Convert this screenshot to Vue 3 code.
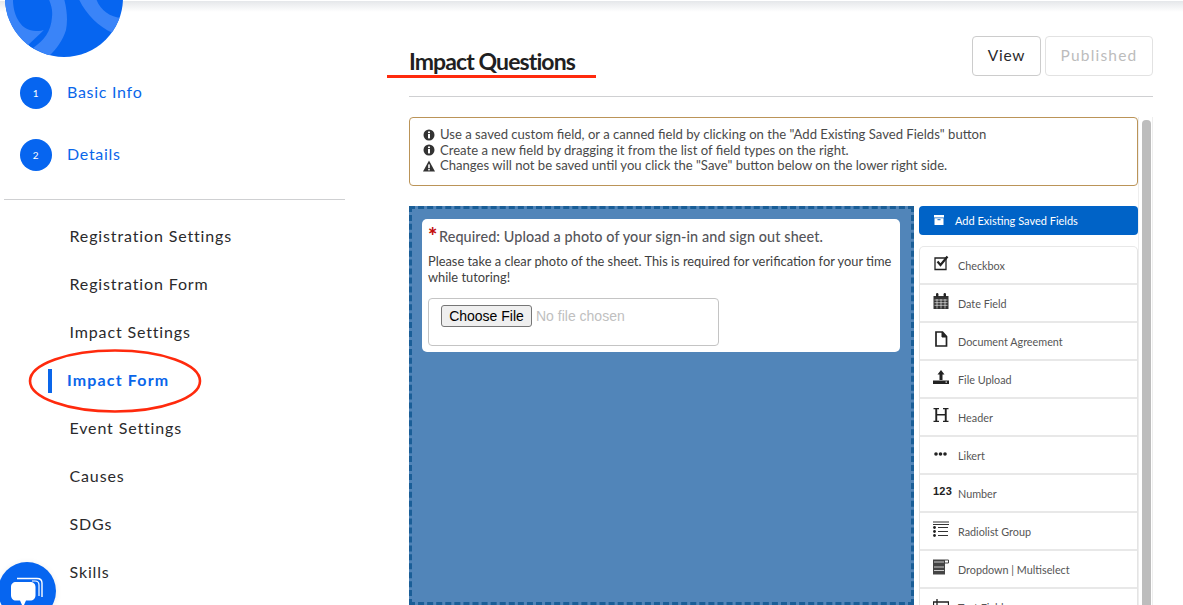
<script setup>
const fields = [
  { label: 'Checkbox', icon: 'check' },
  { label: 'Date Field', icon: 'date' },
  { label: 'Document Agreement', icon: 'doc' },
  { label: 'File Upload', icon: 'upload' },
  { label: 'Header', icon: 'header' },
  { label: 'Likert', icon: 'likert' },
  { label: 'Number', icon: 'number' },
  { label: 'Radiolist Group', icon: 'radio' },
  { label: 'Dropdown | Multiselect', icon: 'drop' },
  { label: 'Text Field', icon: 'text' }
]
const menu = ['Registration Settings', 'Registration Form', 'Impact Settings', 'Impact Form', 'Event Settings', 'Causes', 'SDGs', 'Skills']
</script>

<template>
  <div class="page">
    <div class="topshade"></div>
    <aside class="side">
      <svg class="logo" viewBox="5 -61 118 118">
        <defs><clipPath id="lc"><circle cx="64" cy="-2" r="59" /></clipPath></defs>
        <circle cx="64" cy="-2" r="59" fill="#0665f0" />
        <g clip-path="url(#lc)">
          <path d="M0 -5H46L44 30L27 46L20 58L0 40Z" fill="#3a84f8" />
          <path d="M13 -5C12 14 20 31 36 31C40 31 43 30.500 44 30C40 36 34 42 28 46L34 50L52 34C55 20 54 8 47 -5Z" fill="#0665f0" />
          <path d="M33 48C44 40 51 32 52 17C53 8 50 2 47 -5H63C67 8 68 20 66 30C63 40 56 50 49 56Z" fill="#3a84f8" />
          <path d="M77 -5C84 12 97 26 113 33L122 18C108 17 98 8 95 -5Z" fill="#3a84f8" />
        </g>
      </svg>
      <div class="steps">
        <a class="step"><span class="num">1</span><span class="steptext">Basic Info</span></a>
        <a class="step"><span class="num">2</span><span class="steptext">Details</span></a>
      </div>
      <hr class="siderule" />
      <nav class="menu">
        <a v-for="m in menu" :key="m" class="item" :class="{ active: m === 'Impact Form' }">{{ m }}</a>
      </nav>
      <svg class="ellipse" viewBox="0 0 174 64">
        <ellipse cx="87" cy="32" rx="85" ry="30.500" fill="none" stroke="#ff2a0d" stroke-width="2.600" />
      </svg>
      <div class="chat">
        <svg width="34" height="34" viewBox="0 0 34 34">
          <path d="M7 4.500H27C30 4.500 32 6 32 9V23" fill="none" stroke="#fff" stroke-width="1.400" />
          <path d="M6 8H20C23.500 8 25.500 10 25.500 13V21C25.500 24.500 23.500 26.500 20 26.500H16L14 31H12L10 26.500H6C3 26.500 1 24.500 1 21V13C1 10 3 8 6 8Z" fill="#fff" />
          <path d="M22 7H25C27.500 7 29 8.500 29 11V22" fill="none" stroke="#fff" stroke-width="1.200" />
        </svg>
      </div>
    </aside>

    <main class="main">
      <header class="head">
        <h1 class="title">Impact Questions</h1>
        <div class="btns">
          <button class="btn view">View</button>
          <button class="btn off">Published</button>
        </div>
      </header>
      <hr class="rule" />
      <div class="workspace">
        <div class="left">
          <div class="notice">
            <div class="nline"><svg class="ni" viewBox="0 0 12 12"><circle cx="6" cy="6" r="5.500" fill="#333" /><rect x="5" y="5" width="2" height="4.400" fill="#fff" /><rect x="5" y="2.500" width="2" height="1.600" fill="#fff" /></svg>Use a saved custom field, or a canned field by clicking on the "Add Existing Saved Fields" button</div>
            <div class="nline"><svg class="ni" viewBox="0 0 12 12"><circle cx="6" cy="6" r="5.500" fill="#333" /><rect x="5" y="5" width="2" height="4.400" fill="#fff" /><rect x="5" y="2.500" width="2" height="1.600" fill="#fff" /></svg>Create a new field by dragging it from the list of field types on the right.</div>
            <div class="nline"><svg class="ni" viewBox="0 0 12 12"><path d="M6 .5L12 11.500H0Z" fill="#333" /><rect x="5.200" y="4.400" width="1.600" height="3.800" fill="#fff" /><rect x="5.200" y="9" width="1.600" height="1.400" fill="#fff" /></svg>Changes will not be saved until you click the "Save" button below on the lower right side.</div>
          </div>
          <div class="builder">
            <section class="drop">
              <div class="card">
                <div class="qlabel"><span class="star">*</span>Required: Upload a photo of your sign-in and sign out sheet.</div>
                <p class="qhelp">Please take a clear photo of the sheet. This is required for verification for your time while tutoring!</p>
                <div class="filebox"><span class="choose">Choose File</span><span class="nofile">No file chosen</span></div>
              </div>
            </section>
            <section class="palette">
              <button class="addbtn">
                <svg class="addicon" viewBox="0 0 10 10"><path d="M0 0H10V2.500H0ZM.5 3.200H9.500V10H.5Z" fill="#fff" /><rect x="3.500" y="4.200" width="3" height="1" fill="#0063c7" /></svg>
                Add Existing Saved Fields
              </button>
              <ul class="flist">
                <li v-for="f in fields" :key="f.label" class="fitem">
                  <span class="ficon">
                    <svg v-if="f.icon === 'check'" viewBox="0 0 16 16" class="fi"><path d="M2 3H13V14.500H2Z" fill="none" stroke="#222" stroke-width="1.300" /><path d="M4.500 6.500L7.500 10L14.500 1.500" fill="none" stroke="#222" stroke-width="2.200" /></svg>
                    <svg v-else-if="f.icon === 'date'" viewBox="0 0 16 16" class="fi"><path d="M.5 3H15.500V16H.5Z" fill="#333" /><path d="M1.500 7H14.500M1.500 9.700H14.500M1.500 12.300H14.500M4 6V15.500M8 6V15.500M12 6V15.500" stroke="#fff" stroke-width=".6" /><rect x="3" y="0" width="2.400" height="4" rx="1.200" fill="#222" /><rect x="10.600" y="0" width="2.400" height="4" rx="1.200" fill="#222" /></svg>
                    <svg v-else-if="f.icon === 'doc'" viewBox="0 0 16 16" class="fi"><path d="M3 1H9.500L13.500 5.500V15H3Z" fill="none" stroke="#222" stroke-width="1.700" /><path d="M9 1V6H13.500" fill="#222" stroke="#222" /></svg>
                    <svg v-else-if="f.icon === 'upload'" viewBox="0 0 16 16" class="fi"><path d="M8 1L11.500 5.500H9.500V11H6.500V5.500H4.500Z" fill="#222" /><path d="M0 11.500H16V15H0Z" fill="#222" /><rect x="12.500" y="12.500" width="1.500" height="1.200" fill="#ddd" /></svg>
                    <svg v-else-if="f.icon === 'header'" viewBox="0 0 16 16" class="fi"><path d="M.5 1H6V2.200H4.200V7H11.800V2.200H10V1H15.500V2.200H13.700V13.800H15.500V15H10V13.800H11.800V8.400H4.200V13.800H6V15H.5V13.800H2.300V2.200H.5Z" fill="#222" /></svg>
                    <svg v-else-if="f.icon === 'likert'" viewBox="0 0 16 16" class="fi"><circle cx="3" cy="9" r="1.800" fill="#222" /><circle cx="7.500" cy="9" r="1.800" fill="#222" /><circle cx="12" cy="9" r="1.800" fill="#222" /></svg>
                    <span v-else-if="f.icon === 'number'" class="num123">123</span>
                    <svg v-else-if="f.icon === 'radio'" viewBox="0 0 16 16" class="fi"><path d="M0 1H16M0 3.500H16M5 6.500H15M5 10.500H15M5 14.500H15" stroke="#333" stroke-width="1" /><circle cx="1.500" cy="6.500" r="1.400" fill="#222" /><circle cx="1.500" cy="10.500" r="1.400" fill="#222" /><circle cx="1.500" cy="14.500" r="1.400" fill="#222" /></svg>
                    <svg v-else-if="f.icon === 'drop'" viewBox="0 0 16 16" class="fi"><path d="M0 .5H12V15.500H0Z" fill="#444" /><path d="M1 3H11M1 8H11M1 11.500H11" stroke="#ccc" stroke-width="1.200" /><path d="M12 1H15.500V4H12" fill="none" stroke="#444" /></svg>
                    <svg v-else viewBox="0 0 16 16" class="fi"><path d="M0.500 5H15.500V13H0.500ZM4 2V15" fill="none" stroke="#222" stroke-width="1.300" /></svg>
                  </span>
                  <span class="flabel">{{ f.label }}</span>
                </li>
              </ul>
            </section>
          </div>
        </div>
        <div class="scroll"><div class="thumb"></div></div>
      </div>
    </main>
  </div>
</template>

<style>
html, body { margin: 0; height: 605px; overflow: hidden; background: #fff; }
</style>

<style scoped>
.page { position: relative; display: flex; width: 1183px; height: 605px; overflow: hidden; background: #fff; font-family: Lato, "Liberation Sans", sans-serif; color: #333; }
.topshade { position: absolute; left: 0; right: 0; top: 1px; height: 11px; background: linear-gradient(#e5e7ea, #fff); }
.side { position: relative; width: 345px; margin-left: 4px; flex: none; display: flex; flex-direction: column; }
.logo { position: relative; display: block; width: 118px; height: 118px; margin: -61px 0 0 1px; flex: none; }
.steps { display: flex; flex-direction: column; gap: 30px; margin: 20px 0 0 16px; }
.step { display: flex; align-items: center; gap: 15px; color: #0a66ea; font-size: 16px; letter-spacing: .72px; }
.steptext { margin-top: -4px; }
.num { width: 32px; height: 32px; border-radius: 50%; background: #0665f0; color: #fff; font-size: 10px; display: flex; align-items: center; justify-content: center; }
.siderule { width: 341px; height: 0; border: 0; border-top: 1px solid #cfd0d2; margin: 28px 0 0; }
.menu { display: flex; flex-direction: column; margin-top: 13px; }
.item { position: relative; height: 48px; line-height: 46px; padding-left: 65.500px; font-size: 16px; letter-spacing: .86px; color: #2a2a2c; }
.item.active { padding-left: 63px; color: #0a66ea; font-weight: 700; letter-spacing: 1.150px; }
.item.active::before { content: ""; position: absolute; left: 44px; top: 12px; width: 4px; height: 24px; background: #0a66ea; }
.ellipse { position: absolute; left: 24px; top: 349px; width: 174px; height: 64px; }
.chat { position: absolute; left: -6px; top: 562px; width: 58px; height: 58px; border-radius: 50%; background: #0665f0; display: flex; align-items: center; justify-content: center; box-shadow: 0 1px 6px rgba(0, 0, 0, .08); }
.main { position: relative; margin-left: 60px; width: 744px; flex: none; display: flex; flex-direction: column; }
.head { position: relative; display: flex; justify-content: space-between; align-items: flex-start; height: 96px; padding-top: 36px; box-sizing: border-box; }
.title { position: relative; margin: 11px 0 0; font-weight: 700; font-size: 23px; line-height: 28px; letter-spacing: -.9px; color: #1f1f22; }
.title::after { content: ""; position: absolute; left: -22px; width: 209px; top: 28px; height: 3px; background: #ff2a0d; }
.btns { display: flex; gap: 4px; }
.btn { height: 40px; padding: 0 0 2px; background: #fff; border: 1px solid #ccc; border-radius: 4px; font-family: Lato, sans-serif; font-size: 15.500px; letter-spacing: .8px; color: #2a2a2c; }
.btn.view { width: 69px; }
.btn.off { width: 108px; border-color: #e2e2e2; color: #bcbcbc; letter-spacing: 1.200px; }
.rule { width: 100%; height: 0; margin: 0; border: 0; border-top: 1px solid #cfd0d2; }
.workspace { display: flex; margin-top: 20px; flex: 1; min-height: 0; }
.left { width: 729px; flex: none; }
.notice { box-sizing: border-box; height: 69px; padding: 9px 13px; border: 1px solid #bb9458; border-radius: 4px; font-size: 13.100px; line-height: 15.500px; color: #4a4a4a; }
.nline { display: flex; align-items: center; gap: 5px; }
.ni { width: 12px; height: 12px; flex: none; }
.builder { display: flex; gap: 5px; margin-top: 20px; }
.drop { box-sizing: border-box; width: 505px; height: 399px; padding: 10px; background: #5185b9; border: 3px dashed #1a5e97; }
.card { box-sizing: border-box; width: 478px; height: 133px; padding: 9px 6px; background: #fff; border-radius: 5px; }
.qlabel { position: relative; font-size: 14.400px; line-height: 18px; color: #55555a; font-weight: 500; letter-spacing: .1px; padding-left: 11px; }
.star { position: absolute; left: 0; top: -3px; color: #c40d0d; font-weight: 900; font-size: 22px; line-height: 22px; }
.qhelp { margin: 7px 0 0; font-size: 12.850px; line-height: 16px; color: #3f3f3f; }
.filebox { box-sizing: border-box; display: flex; align-items: flex-start; margin-top: 13px; width: 291px; height: 48px; padding: 6px 12px; border: 1px solid #c4c4c4; border-radius: 4px; }
.choose { box-sizing: border-box; width: 91px; height: 22px; line-height: 21px; text-align: center; background: #efefef; border: 1px solid #767676; border-radius: 3px; font-family: "Liberation Sans", sans-serif; font-size: 14px; color: #000; }
.nofile { margin-left: 4px; line-height: 22px; font-family: "Liberation Sans", sans-serif; font-size: 14px; color: #c0c0c0; }
.palette { width: 219px; flex: none; }
.addbtn { display: flex; align-items: center; gap: 11px; box-sizing: border-box; width: 100%; height: 29px; padding: 0 15px 1px; border: 0; border-radius: 4px; background: #0063c7; color: #fff; font-family: Lato, sans-serif; font-size: 11px; }
.addicon { width: 10px; height: 10px; flex: none; }
.flist { list-style: none; margin: 11px 0 0; padding: 0; border: 1px solid #e4e4e4; border-top-color: #e8e8e8; border-radius: 5px 5px 0 0; }
.fitem { box-sizing: border-box; display: flex; align-items: center; height: 38px; padding: 0 0 0 13px; border-bottom: 2px solid #e8e8e8; font-size: 10.800px; color: #555; }
.ficon { width: 25px; height: 16px; display: flex; align-items: center; flex: none; margin-top: -4px; }
.flabel { margin-top: 1px; }
.fi { width: 16px; height: 16px; }
.num123 { font-family: "Liberation Sans", sans-serif; font-weight: 700; font-size: 11px; color: #222; letter-spacing: .2px; }
.scroll { width: 15px; box-sizing: border-box; padding: 3px 1px 0 3px; border-left: 1px solid #eee; border-right: 1px solid #eee; }
.thumb { height: 100%; border-radius: 4px 4px 0 0; background: #bdbdbd; }
</style>
